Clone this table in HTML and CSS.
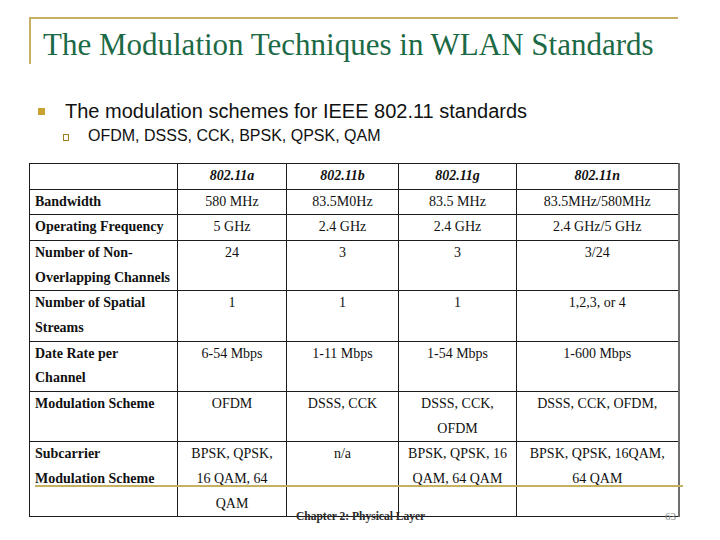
FILE: index.html
```html
<!DOCTYPE html>
<html>
<head>
<meta charset="utf-8">
<link rel="stylesheet" href="styles.css">
</head>
<body>
<div class="slide">
  <header class="title-box">
    <h1>The Modulation Techniques in WLAN Standards</h1>
  </header>
  <ul class="bullets">
    <li class="lvl1"><span class="mark1"></span><span>The modulation schemes for IEEE 802.11 standards</span></li>
    <li class="lvl2"><span class="mark2"></span><span>OFDM, DSSS, CCK, BPSK, QPSK, QAM</span></li>
  </ul>
  <table class="spec">
    <colgroup>
      <col class="c0"><col class="c1"><col class="c2"><col class="c3"><col class="c4">
    </colgroup>
    <thead>
      <tr><th></th><th>802.11a</th><th>802.11b</th><th>802.11g</th><th>802.11n</th></tr>
    </thead>
    <tbody>
      <tr><td class="rh">Bandwidth</td><td>580 MHz</td><td>83.5M0Hz</td><td>83.5 MHz</td><td>83.5MHz/580MHz</td></tr>
      <tr><td class="rh">Operating Frequency</td><td>5 GHz</td><td>2.4 GHz</td><td>2.4 GHz</td><td>2.4 GHz/5 GHz</td></tr>
      <tr><td class="rh">Number of Non-<br>Overlapping Channels</td><td>24</td><td>3</td><td>3</td><td>3/24</td></tr>
      <tr><td class="rh">Number of Spatial<br>Streams</td><td>1</td><td>1</td><td>1</td><td>1,2,3, or 4</td></tr>
      <tr><td class="rh">Date Rate per<br>Channel</td><td>6-54 Mbps</td><td>1-11 Mbps</td><td>1-54 Mbps</td><td>1-600 Mbps</td></tr>
      <tr><td class="rh">Modulation Scheme</td><td>OFDM</td><td>DSSS, CCK</td><td>DSSS, CCK,<br>OFDM</td><td>DSSS, CCK, OFDM,</td></tr>
      <tr><td class="rh">Subcarrier<br>Modulation Scheme</td><td>BPSK, QPSK,<br>16 QAM, 64<br>QAM</td><td>n/a</td><td>BPSK, QPSK, 16<br>QAM, 64 QAM</td><td>BPSK, QPSK, 16QAM,<br>64 QAM</td></tr>
    </tbody>
  </table>
  <footer class="foot">
    <div class="foot-line"></div>
    <div class="foot-text">Chapter 2: Physical Layer</div>
    <div class="foot-page">63</div>
  </footer>
</div>
</body>
</html>
```
FILE: styles.css
```css
html, body {
  margin: 0;
  padding: 0;
  background: #ffffff;
}

.slide {
  position: relative;
  width: 720px;
  height: 540px;
  overflow: hidden;
  background: #ffffff;
}

.title-box {
  margin: 17px 0 0 29px;
  width: 647px;
  height: 45px;
  border-top: 2px solid #c6b064;
  border-left: 2px solid #c6b064;
}

.title-box h1 {
  margin: 0;
  padding: 9px 0 0 12px;
  font-family: "Liberation Serif", "DejaVu Serif", serif;
  font-weight: normal;
  font-size: 31px;
  line-height: 34px;
  color: #1c6a45;
  white-space: nowrap;
}

.bullets {
  list-style: none;
  margin: 36px 0 0 0;
  padding: 0;
  font-family: "Liberation Sans", Arial, sans-serif;
  color: #111111;
}

.bullets li {
  display: flex;
  align-items: center;
}

.lvl1 {
  padding-left: 38px;
  font-size: 20px;
  line-height: 23px;
  gap: 20px;
}

.lvl2 {
  padding-left: 63px;
  font-size: 16px;
  line-height: 20px;
  gap: 19px;
  margin-top: 3px;
}

.mark1 {
  width: 7px;
  height: 7px;
  background: #c9a232;
  flex: none;
}

.mark2 {
  width: 4px;
  height: 5px;
  border: 1px solid #9c7e26;
  flex: none;
  margin-top: 3px;
}

.spec {
  margin: 17px 0 0 29px;
  width: 650px;
  border-collapse: collapse;
  table-layout: fixed;
  font-family: "Liberation Serif", "Times New Roman", serif;
  font-size: 14px;
  line-height: 24.65px;
  color: #111111;
}

.c0 { width: 148px; }
.c1 { width: 109px; }
.c2 { width: 112px; }
.c3 { width: 118px; }
.c4 { width: 162px; }

.spec th,
.spec td {
  border: 1px solid #1c1c1c;
  padding: 0 3px;
  text-align: center;
  vertical-align: top;
  white-space: nowrap;
}

.spec th {
  font-style: italic;
  font-weight: bold;
}

.spec td.rh {
  text-align: left;
  font-weight: bold;
  padding-left: 5px;
}

.spec tr > :last-child {
  border-right: 2px solid #6d6d6d;
}

.foot-line {
  position: absolute;
  left: 35px;
  top: 485px;
  width: 648px;
  height: 2px;
  background: #c6b064;
}

.foot-text {
  position: absolute;
  left: 296px;
  top: 509px;
  font-family: "Liberation Serif", "Times New Roman", serif;
  font-weight: bold;
  font-size: 11.5px;
  line-height: 14px;
  color: #2a2a2a;
}

.foot-page {
  position: absolute;
  left: 665px;
  top: 509px;
  font-family: "Liberation Serif", "Times New Roman", serif;
  font-size: 11px;
  line-height: 14px;
  color: #8a8a8a;
}
```
